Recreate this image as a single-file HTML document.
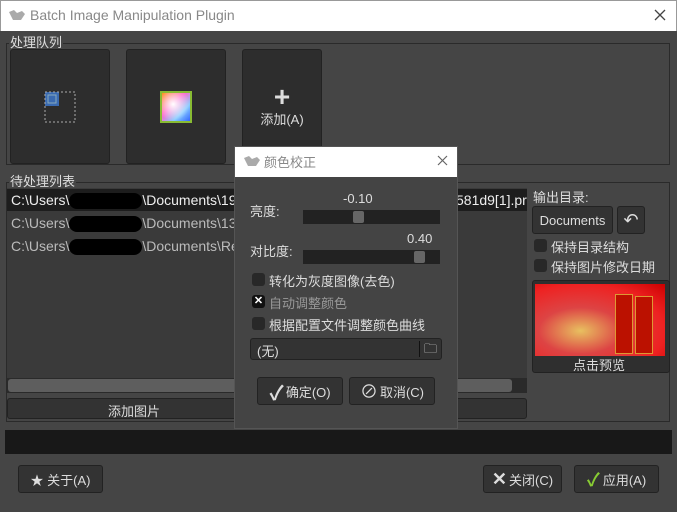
<!DOCTYPE html>
<html><head><meta charset="utf-8"><style>
*{margin:0;padding:0;box-sizing:border-box}
body{width:677px;height:512px;background:#454545;font-family:"Liberation Sans","Noto Sans CJK SC",sans-serif;font-size:13px;color:#ddd;position:relative;overflow:hidden}
.a{position:absolute}
.btn{position:absolute;background:#333;border:1px solid #222;border-radius:3px;color:#ddd;display:flex;align-items:center;justify-content:center}
.cb{position:absolute;width:13px;height:13px;background:#282828;border-radius:3px}
.t{position:absolute;white-space:nowrap}
</style></head><body>
<div class="a" style="left:0;top:0;width:677px;height:31px;background:#fff;border:1px solid #999;border-bottom:none"></div>
<svg class="a" style="left:8px;top:9px" width="18" height="12"><path d="M1 3 L6 1 L9 4 L14 2 L17 5 L13 11 L5 11 Z" fill="#aaa"/></svg>
<div class="t" style="left:30px;top:7px;color:#888;font-size:14px">Batch Image Manipulation Plugin</div>
<svg class="a" style="left:654px;top:9px" width="12" height="12"><path d="M1 1L11 11M11 1L1 11" stroke="#444" stroke-width="1.3"/></svg>

<div class="a" style="left:6px;top:43px;width:664px;height:122px;border:1px solid #2a2a2a"></div>
<div class="t" style="left:9px;top:36px;line-height:13px;background:#454545;padding:0 1px">处理队列</div>
<div class="btn" style="left:10px;top:49px;width:100px;height:115px;background:#2d2d2d">
<svg width="32" height="32"><rect x="1" y="1" width="14" height="14" fill="#3a6ab0"/><rect x="4" y="4" width="8" height="8" fill="none" stroke="#8ab" /><rect x="1" y="1" width="30" height="30" fill="none" stroke="#aaa" stroke-dasharray="2 2"/></svg></div>
<div class="btn" style="left:126px;top:49px;width:100px;height:115px;background:#2d2d2d">
<div style="width:32px;height:32px;background:linear-gradient(135deg,#f80 0%,#f6c 40%,#8cf 70%,#36f 100%);border:2px solid #8b3">
<div style="width:100%;height:100%;background:radial-gradient(circle at 40% 40%,#fff 0%,rgba(255,255,255,0) 70%)"></div></div></div>
<div class="btn" style="left:242px;top:49px;width:80px;height:115px;background:#2d2d2d;flex-direction:column">
<div style="font-size:28px;line-height:24px;font-weight:bold;color:#ddd">+</div><div>添加(A)</div></div>

<div class="a" style="left:6px;top:182px;width:664px;height:240px;border:1px solid #2a2a2a"></div>
<div class="t" style="left:9px;top:175px;line-height:13px;background:#454545;padding:0 1px">待处理列表</div>
<div class="a" style="left:7px;top:188px;width:520px;height:205px;background:#3a3a3a"></div>
<div class="a" style="left:7px;top:189px;width:520px;height:22px;background:#1d1d1d"></div>
<div class="t" style="left:11px;top:192px;font-size:14px;color:#eee">C:\Users\<span style="display:inline-block;width:73px;height:16px;background:#000;border-radius:8px;vertical-align:middle"></span>\Documents\19</div>
<div class="t" style="left:11px;top:215px;font-size:14px;color:#bbb">C:\Users\<span style="display:inline-block;width:73px;height:16px;background:#000;border-radius:8px;vertical-align:middle"></span>\Documents\13</div>
<div class="t" style="left:11px;top:238px;font-size:14px;color:#bbb">C:\Users\<span style="display:inline-block;width:73px;height:16px;background:#000;border-radius:8px;vertical-align:middle"></span>\Documents\Re</div>
<div class="t" style="left:456px;top:192px;font-size:14px;color:#eee">581d9[1].pr</div>
<div class="a" style="left:7px;top:378px;width:520px;height:15px;background:#2a2a2a"></div>
<div class="a" style="left:8px;top:379px;width:504px;height:13px;background:#5e5e5e;border-radius:3px"></div>
<div class="btn" style="left:7px;top:398px;width:520px;height:21px;background:#333">
<span style="position:absolute;left:100px;top:2px">添加图片</span></div>

<div class="t" style="left:533px;top:187px">输出目录:</div>
<div class="btn" style="left:532px;top:206px;width:81px;height:28px">Documents</div>
<div class="btn" style="left:617px;top:206px;width:28px;height:28px;font-size:18px">↶</div>
<div class="cb" style="left:534px;top:239px"></div><div class="t" style="left:551px;top:237px">保持目录结构</div>
<div class="cb" style="left:534px;top:259px"></div><div class="t" style="left:551px;top:257px">保持图片修改日期</div>
<div class="btn" style="left:532px;top:280px;width:138px;height:93px;display:block;background:#2f2f2f">
<div style="position:absolute;left:2px;top:3px;width:130px;height:72px;background:radial-gradient(ellipse at 35% 65%,#e8c060 0%,#d44 35%,#e22 70%,#c00 100%)">
<div style="position:absolute;left:80px;top:10px;width:18px;height:60px;background:#b10;border:1px solid #d93"></div>
<div style="position:absolute;left:100px;top:12px;width:18px;height:58px;background:#b10;border:1px solid #d93"></div></div>
<div style="position:absolute;left:40px;top:74px">点击预览</div></div>

<div class="a" style="left:5px;top:430px;width:667px;height:24px;background:#181818"></div>
<div class="btn" style="left:18px;top:465px;width:85px;height:28px">★ 关于(A)</div>
<div class="btn" style="left:483px;top:465px;width:79px;height:28px"><b style="font-size:18px;margin-right:2px">✕</b>关闭(C)</div>
<div class="btn" style="left:574px;top:465px;width:85px;height:28px"><b style="color:#8c3;font-size:18px;margin-right:3px">✓</b>应用(A)</div>

<div class="a" style="left:234px;top:146px;width:224px;height:283px;background:#444;border:1px solid #555"></div>
<div class="a" style="left:235px;top:147px;width:222px;height:30px;background:#fff"></div>
<svg class="a" style="left:243px;top:155px" width="18" height="12"><path d="M1 3 L6 1 L9 4 L14 2 L17 5 L13 11 L5 11 Z" fill="#aaa"/></svg>
<div class="t" style="left:264px;top:152px;color:#888;font-size:13px">颜色校正</div>
<svg class="a" style="left:437px;top:155px" width="11" height="11"><path d="M1 1L10 10M10 1L1 10" stroke="#666" stroke-width="1.2"/></svg>
<div class="t" style="left:250px;top:201px">亮度:</div>
<div class="t" style="left:343px;top:191px">-0.10</div>
<div class="a" style="left:303px;top:210px;width:137px;height:14px;background:#222"></div>
<div class="a" style="left:353px;top:211px;width:11px;height:12px;background:#666;border-radius:2px"></div>
<div class="t" style="left:250px;top:241px">对比度:</div>
<div class="t" style="left:407px;top:231px">0.40</div>
<div class="a" style="left:303px;top:250px;width:137px;height:14px;background:#222"></div>
<div class="a" style="left:414px;top:251px;width:11px;height:12px;background:#666;border-radius:2px"></div>
<div class="cb" style="left:252px;top:273px"></div><div class="t" style="left:269px;top:271px">转化为灰度图像(去色)</div>
<div class="cb" style="left:252px;top:295px;background:#111;color:#fff;font-size:11px;line-height:13px;text-align:center;font-weight:bold">✕</div><div class="t" style="left:269px;top:293px;color:#999">自动调整颜色</div>
<div class="cb" style="left:252px;top:317px"></div><div class="t" style="left:269px;top:315px">根据配置文件调整颜色曲线</div>
<div class="a" style="left:250px;top:338px;width:192px;height:22px;background:#333;border:1px solid #222;border-radius:3px"></div>
<div class="t" style="left:257px;top:341px">(无)</div>
<div class="a" style="left:419px;top:341px;width:1px;height:16px;background:#111"></div>
<div class="t" style="left:424px;top:340px;font-size:13px">🗀</div>
<div class="btn" style="left:257px;top:377px;width:86px;height:28px"><b style="font-size:20px;margin-right:2px">✓</b>确定(O)</div>
<div class="btn" style="left:349px;top:377px;width:86px;height:28px"><span style="font-size:18px;margin-right:2px">⊘</span>取消(C)</div>
</body></html>
